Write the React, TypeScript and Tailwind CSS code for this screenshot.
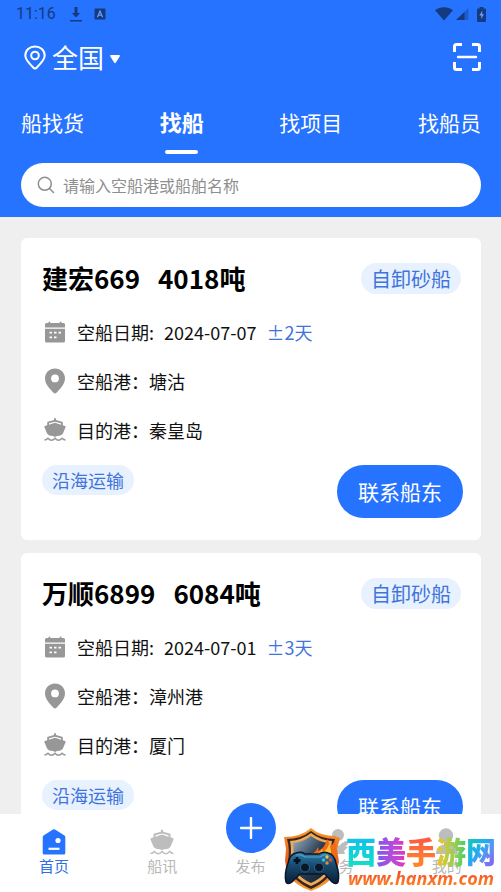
import { useState } from 'react';

interface Ship {
  id: number;
  name: string;
  tonnage: string;
  shipType: string;
  emptyDate: string;
  tolerance: string;
  emptyPort: string;
  targetPort: string;
  transport: string;
}

const TABS = ['船找货', '找船', '找项目', '找船员'];

const SHIPS: Ship[] = [
  {
    id: 1,
    name: '建宏669',
    tonnage: '4018吨',
    shipType: '自卸砂船',
    emptyDate: '2024-07-07',
    tolerance: '±2天',
    emptyPort: '塘沽',
    targetPort: '秦皇岛',
    transport: '沿海运输',
  },
  {
    id: 2,
    name: '万顺6899',
    tonnage: '6084吨',
    shipType: '自卸砂船',
    emptyDate: '2024-07-01',
    tolerance: '±3天',
    emptyPort: '漳州港',
    targetPort: '厦门',
    transport: '沿海运输',
  },
];

function StatusBar() {
  return (
    <div className="flex h-7 items-center justify-between pl-4 pr-[15px] text-[#143a80]">
      <div className="flex items-center">
        <span className="font-['Roboto',sans-serif] text-base leading-5">11:16</span>
        <svg className="ml-[14px] h-[15px] w-3" viewBox="0 0 12 15" fill="currentColor">
          <path d="M4.5 0h3v6h2.6L6 10.6 1.9 6h2.6zM0 13h12v1.5H0z" />
        </svg>
        <svg className="ml-3 h-[12px] w-[12px]" viewBox="0 0 12 12">
          <rect x="0.5" y="0.5" width="11" height="11" rx="1" fill="currentColor" />
          <path d="M3.4 9.2 6 3l2.6 6.2M4.3 7.2h3.4" fill="none" stroke="#6f9df5" strokeWidth="1.2" />
        </svg>
      </div>
      <div className="flex items-center">
        <svg className="h-[14px] w-[18px]" viewBox="0 0 18 14" fill="currentColor">
          <path d="M0 3.2C5 -.8 13 -.8 18 3.2L9 13.6z" />
        </svg>
        <svg className="ml-[2px] h-[14px] w-[14px]" viewBox="0 0 14 14" fill="currentColor">
          <path d="M13.5 1v12H1z" opacity="0.4" />
          <path d="M9.5 5v8H1z" />
        </svg>
        <svg className="ml-2 h-[15px] w-[9px]" viewBox="0 0 9 15">
          <path d="M2.6 0h3.8v1.5H8q1 0 1 1V14q0 1-1 1H1q-1 0-1-1V2.500q0-1 1-1h1.600z" fill="currentColor" />
          <path d="M5.200 3.800 2.400 8.600h1.900v3.400L6.900 7.300H5.200z" fill="#6f9df5" />
        </svg>
      </div>
    </div>
  );
}

function CalendarIcon() {
  return (
    <svg className="h-[22px] w-[22px]" viewBox="0 0 22 22" fill="#979797">
      <path d="M2.500 2h2V1.200q0-.7.900-.7t.9.700V2h9.400v-.8q0-.7.900-.7t.9.700V2h2q1.500 0 1.500 1.500V6.500H1V3.500Q1 2 2.500 2z" />
      <path
        fillRule="evenodd"
        d="M1 7.700h20V20q0 1.500-1.500 1.500h-17Q1 21.500 1 20zM5.500 10.800v1.700H8v-1.700zm4.500 0v1.700h2.500v-1.700zm4.500 0v1.700H17v-1.700zM5.500 15.500v1.700H8v-1.700zm4.500 0v1.700h2.500v-1.700z"
      />
    </svg>
  );
}

function PinIcon() {
  return (
    <svg className="h-[26px] w-[22px]" viewBox="0 0 22 26" fill="#979797">
      <path
        fillRule="evenodd"
        d="M11 .5C5.300.5 1 4.800 1 10.200c0 5 3.500 9.300 8.500 14.500q1.500 1.400 3 0C17.500 19.500 21 15.200 21 10.200 21 4.800 16.700.5 11 .5zm0 6a3.900 3.900 0 1 1 0 7.800 3.900 3.900 0 0 1 0-7.800z"
      />
    </svg>
  );
}

function BoatIcon({ className }: { className: string }) {
  return (
    <svg className={className} viewBox="0 0 24 26" fill="currentColor">
      <path
        fillRule="evenodd"
        d="M10.900 1.200Q12-.2 13.100 1.200V2.700L19.700 4.500q.8.200.8 1v2.800l2.500.9q1 .4.500 1.300l-3 7.200q-1.700 2.200-4 2.200-2.300 0-4.500 1.200Q9.800 19.900 7.500 19.900q-2.300 0-4-2.200L.5 10.500Q0 9.600 1 9.200l2.500-.9V5.500q0-.8.800-1l6.600-1.800zM12 4.500 5.500 6.300v1.400L12 5.600l6.500 2.100V6.300z"
      />
      <path
        d="M.5 24.400q2.300 0 3.800-1.900 1.900 2.200 3.900 2.200t3.800-2.200q1.800 2.200 3.800 2.200t3.900-2.200q1.500 1.900 3.800 1.900"
        fill="none"
        stroke="currentColor"
        strokeWidth="1.500"
      />
    </svg>
  );
}

function ShipCard({ ship }: { ship: Ship }) {
  return (
    <article className="rounded-md bg-white pb-[22px] pl-[21px] pt-[25px]">
      <div className="flex items-start justify-between pr-5">
        <h2 className="flex gap-[18px] text-[26px] font-bold leading-[29px] text-black">
          <span>{ship.name}</span>
          <span>{ship.tonnage}</span>
        </h2>
        <span className="rounded-full bg-[#e8f1fe] px-[10px] text-xl leading-[31px] text-[#3f74dc]">
          {ship.shipType}
        </span>
      </div>

      <ul className="mt-[13px] pl-[2px] text-lg leading-6 text-[#111111]">
        <li className="flex h-[49px] items-center">
          <CalendarIcon />
          <span className="ml-[11px]">空船日期:</span>
          <span className="ml-[10px]">{ship.emptyDate}</span>
          <span className="ml-[10px] text-[#3f74dc]">{ship.tolerance}</span>
        </li>
        <li className="flex h-[49px] items-center">
          <PinIcon />
          <span className="ml-[11px]">空船港：{ship.emptyPort}</span>
        </li>
        <li className="flex h-[49px] items-center">
          <BoatIcon className="h-[25px] w-[22px] text-[#979797]" />
          <span className="ml-[11px]">目的港：{ship.targetPort}</span>
        </li>
      </ul>

      <div className="mt-[11px] flex items-start justify-between pr-[18px]">
        <span className="rounded-full bg-[#e8f1fe] px-[10px] text-lg leading-[30px] text-[#3f74dc]">
          {ship.transport}
        </span>
        <button className="rounded-full bg-[#2673ff] px-[21px] text-[21px] leading-[53px] text-white">
          联系船东
        </button>
      </div>
    </article>
  );
}

function BottomNav() {
  return (
    <nav className="relative flex h-[78px] shrink-0 bg-white text-[15px] leading-5 text-[#b8b8b8]">
      <a href="#home" className="flex flex-1 flex-col items-center pt-[14px] text-[#2f6fe4]">
        <svg className="h-7 w-6" viewBox="0 0 24 28">
          <path d="M11 1.500q1-.7 2 0l9.500 6q.8.600.8 1.500v16q0 1.500-1.500 1.500H2.200Q.7 26.500.7 25V9q0-.9.800-1.500z" fill="#2673ff" />
          <circle cx="16" cy="12.500" r="2.600" fill="#fff" />
          <path d="M6.500 20.800h11" stroke="#fff" strokeWidth="2.200" />
        </svg>
        <span>首页</span>
      </a>
      <a href="#news" className="flex flex-1 flex-col items-center pt-[14px]">
        <BoatIcon className="h-7 w-6 text-[#bdbdbd]" />
        <span>船讯</span>
      </a>
      <a href="#publish" className="-mt-[11px] flex w-[68px] flex-col items-center">
        <span className="flex h-[50px] w-[50px] items-center justify-center rounded-full bg-[#2673ff]">
          <svg className="h-[22px] w-[22px]" viewBox="0 0 22 22">
            <path d="M11 1v20M1 11h20" stroke="#fff" strokeWidth="2.400" strokeLinecap="round" />
          </svg>
        </span>
        <span className="mt-[3px]">发布</span>
      </a>
      <a href="#service" className="flex flex-1 flex-col items-center pt-[14px]">
        <svg className="h-7 w-6" viewBox="0 0 24 28" fill="#bdbdbd">
          <circle cx="11" cy="7" r="6" />
          <path d="M1 26q0-9 8-11l3 3 4-4 1 4 4 1-4 4 1 3z" />
          <path d="m12 22 7-7" stroke="#bdbdbd" strokeWidth="4" strokeLinecap="round" />
        </svg>
        <span>服务</span>
      </a>
      <a href="#mine" className="flex flex-1 flex-col items-center pt-[14px]">
        <svg className="h-7 w-6" viewBox="0 0 24 28" fill="#bdbdbd">
          <circle cx="11" cy="7.500" r="7.200" />
          <path d="M1 26q0-9.500 11-9.500T23 26z" />
        </svg>
        <span>我的</span>
      </a>
      <SiteMark />
    </nav>
  );
}

function SiteMark() {
  return (
    <div className="pointer-events-none absolute bottom-0 right-[5px] flex items-center gap-1">
      <svg className="h-16 w-[60px]" viewBox="0 0 60 64">
        <defs>
          <linearGradient id="rim" x1="0" y1="0" x2="0" y2="1">
            <stop offset="0" stopColor="#f79a2e" />
            <stop offset="0.5" stopColor="#e9601a" />
            <stop offset="1" stopColor="#f6a234" />
          </linearGradient>
          <linearGradient id="steel" x1="0" y1="0" x2="1" y2="1">
            <stop offset="0" stopColor="#9fb2c2" />
            <stop offset="0.5" stopColor="#2b3f55" />
            <stop offset="1" stopColor="#101b2b" />
          </linearGradient>
          <linearGradient id="pad" x1="0" y1="0" x2="0" y2="1">
            <stop offset="0" stopColor="#2f83b3" />
            <stop offset="0.4" stopColor="#184c70" />
            <stop offset="1" stopColor="#0b1d38" />
          </linearGradient>
        </defs>
        <path d="M29 0q9 8 24 8l5 2-3 11 2 13-3 11q-8 12-25 18Q12 57 5 45L3 33l1-12L2 9q17 0 27-9z" fill="url(#rim)" />
        <path d="M29 3q10 8 24 8-3 9-1 24-2 17-23 26Q8 52 6 35 8 20 5 11q14 0 24-8z" fill="#3a2320" />
        <path d="M29 5q9 7 21 8-2 9 0 22-2 15-21 23Q10 50 8 35q2-13 0-22 12-1 21-8z" fill="#edac58" />
        <path d="M29 8q8 6 18 7-1 8 0 20-2 13-18 20-16-7-18-20 1-12 0-20 10-1 18-7z" fill="url(#steel)" />
        <path d="M23 27q10 0 13-8 1 2 0 4 7-3 9-12 3 4 2 8 4-2 6-7 2 10 0 24l-4 2H30z" fill="#f36a16" />
        <path d="M32 27q6-1 8-6l1 3q5-3 6-8 3 7 2 16l-10-3z" fill="#ffc43a" />
        <path
          d="M14 25q6-2 9 1h14q4-3 9-1 6 1 8 10 4 12 2 19-2 3-6 0l-7-8H18l-8 8q-4 3-6 0-2-8 2-19 2-9 8-10z"
          fill="url(#pad)"
          stroke="#0a162b"
          strokeWidth="1.500"
        />
        <path d="M14 27q5-1 9 2h15q4-3 8-2" fill="none" stroke="#55a4c7" strokeWidth="1.200" />
        <circle cx="23" cy="39.500" r="4.500" fill="#0a1728" stroke="#2b688c" />
        <circle cx="37" cy="39.500" r="4.500" fill="#0a1728" stroke="#2b688c" />
        <path d="M15 29v7M11.500 32.500h7" stroke="#071323" strokeWidth="2.800" />
        <circle cx="45" cy="29" r="1.700" fill="#f5c63b" />
        <circle cx="41.500" cy="32" r="1.700" fill="#38bfe5" />
        <circle cx="48.500" cy="32" r="1.700" fill="#f04b2e" />
        <circle cx="45" cy="35" r="1.700" fill="#f18a2a" />
      </svg>
      <div className="flex flex-col items-end">
        <div className="flex text-[30px] font-black leading-9">
          <span className="bg-linear-to-b from-[#17b9f2] to-[#18e0c4] bg-clip-text text-transparent">西</span>
          <span className="bg-linear-to-r from-[#7a55f2] to-[#e22fc4] bg-clip-text text-transparent">美</span>
          <span className="bg-linear-to-b from-[#ff4a4a] to-[#ff8a1c] bg-clip-text text-transparent">手</span>
          <span className="bg-linear-to-r from-[#f0c520] to-[#35cf62] bg-clip-text text-transparent">游</span>
          <span className="bg-linear-to-br from-[#20d0a0] via-[#25a8f5] to-[#8b4df0] bg-clip-text text-transparent">网</span>
        </div>
        <span className="bg-linear-to-b from-[#f0322c] to-[#ff8a1c] bg-clip-text pr-[2px] font-['Noto_Sans',sans-serif] text-lg font-bold italic leading-5 text-transparent">
          www.hanxm.com
        </span>
      </div>
    </div>
  );
}

export default function App() {
  const [activeTab, setActiveTab] = useState('找船');
  const [keyword, setKeyword] = useState('');

  return (
    <div className="flex h-screen flex-col bg-[#efefef] font-['Noto_Sans_CJK_SC',sans-serif]">
      <header className="shrink-0 bg-[#2673ff] pb-[10px] text-white">
        <StatusBar />

        {/* Region and scan */}
        <div className="flex h-[58px] items-center justify-between pl-6 pr-5">
          <button className="flex items-center text-[26px] leading-9">
            <svg className="h-[25px] w-[22px]" viewBox="0 0 22 25" fill="none" stroke="currentColor" strokeWidth="2">
              <path d="M11 23.400q-1 0-1.800-.9C4.500 18 1.300 14.700 1.300 10.600 1.300 5.400 5.600 1.500 11 1.500s9.700 3.900 9.700 9.100c0 4.100-3.200 7.400-7.900 11.900q-.8.900-1.800.9z" />
              <circle cx="11" cy="10.500" r="3.800" />
            </svg>
            <span className="ml-[6px]">全国</span>
            <svg className="ml-[6px] mt-1 h-[9px] w-[10px]" viewBox="0 0 10 9" fill="currentColor">
              <path d="M.8 0h8.400q1.200.4.500 1.600L5.900 7.600q-.9 1.100-1.800 0L.3 1.600Q-.4.400.8 0z" />
            </svg>
          </button>
          <button aria-label="扫一扫">
            <svg
              className="h-7 w-7"
              viewBox="0 0 28 28"
              fill="none"
              stroke="currentColor"
              strokeWidth="3"
              strokeLinejoin="round"
            >
              <path d="M1.500 9V3.500q0-2 2-2H9M19 1.500h5.500q2 0 2 2V9M26.500 19v5.500q0 2-2 2H19M9 26.500H3.500q-2 0-2-2V19" />
              <path d="M5 14h18" strokeWidth="2.400" strokeLinecap="round" />
            </svg>
          </button>
        </div>

        {/* Tabs */}
        <div className="flex justify-between pb-[9px] pl-[21px] pr-5 pt-[21px]">
          {TABS.map((tab) => (
            <button key={tab} onClick={() => setActiveTab(tab)} className="flex flex-col items-center">
              <span
                className={
                  tab === activeTab ? 'text-[22px] font-bold leading-7' : 'text-[21px] leading-[30px]'
                }
              >
                {tab}
              </span>
              {tab === activeTab && <span className="mt-[15px] h-1 w-[33px] rounded-full bg-white" />}
            </button>
          ))}
        </div>

        {/* Search */}
        <label className="ml-[21px] mr-5 flex h-11 items-center rounded-full bg-white pl-4 pr-5">
          <svg className="h-[18px] w-[18px] shrink-0" viewBox="0 0 18 18" fill="none" stroke="#8e8e8e" strokeWidth="1.500">
            <circle cx="7.800" cy="7.800" r="6.500" />
            <path d="m12.500 12.500 4 4" strokeLinecap="round" />
          </svg>
          <input
            type="text"
            aria-label="搜索"
            value={keyword}
            onChange={(e) => setKeyword(e.target.value)}
            placeholder="请输入空船港或船舶名称"
            className="ml-2 min-w-0 flex-1 text-base leading-6 text-[#333333] outline-none placeholder:text-[#8e8e8e]"
          />
        </label>
      </header>

      <main className="flex min-h-0 flex-1 flex-col gap-[13px] overflow-y-auto pl-[21px] pr-5 pt-[21px] [scrollbar-width:none]">
        {SHIPS.map((ship) => (
          <ShipCard key={ship.id} ship={ship} />
        ))}
      </main>

      <BottomNav />
    </div>
  );
}
